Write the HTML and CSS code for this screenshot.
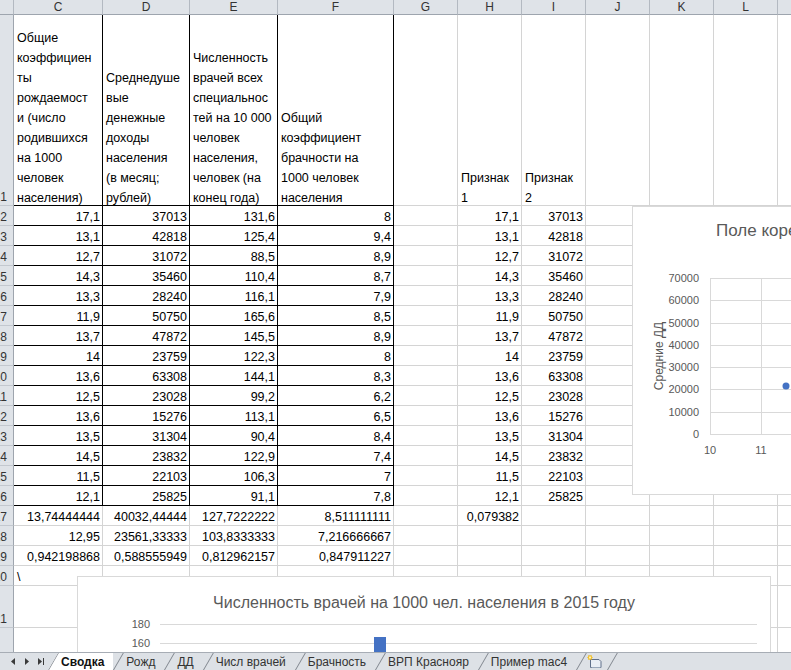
FILE: index.html
```html
<!DOCTYPE html>
<html lang="ru">
<head>
    <meta charset="UTF-8">
    <title>Сводка</title>
    <link rel="stylesheet" href="styles.css">
</head>
<body>
<div class="book">
    <div class="sheet">
        <div class="grid">
            <div class="ch"></div><div class="ch">C</div><div class="ch">D</div><div class="ch">E</div><div class="ch">F</div><div class="ch">G</div><div class="ch">H</div><div class="ch">I</div><div class="ch">J</div><div class="ch">K</div><div class="ch">L</div><div class="ch">M</div>

            <div class="rn">1</div>
            <div class="b"><span class="wrap">Общие<br>коэффициен<br>ты<br>рождаемост<br>и (число<br>родившихся<br>на 1000<br>человек<br>населения)</span></div>
            <div class="b"><span class="wrap">Среднедуше<br>вые<br>денежные<br>доходы<br>населения<br>(в месяц;<br>рублей)</span></div>
            <div class="b"><span class="wrap">Численность<br>врачей всех<br>специальнос<br>тей на 10 000<br>человек<br>населения,<br>человек (на<br>конец года)</span></div>
            <div class="b"><span class="wrap">Общий<br>коэффициент<br>брачности на<br>1000 человек<br>населения</span></div>
            <div></div>
            <div><span class="wrap">Признак<br>1</span></div>
            <div><span class="wrap">Признак<br>2</span></div>
            <div></div><div></div><div></div><div></div>

            <div class="rn">2</div><div class="b n">17,1</div><div class="b n">37013</div><div class="b n">131,6</div><div class="b n">8</div><div></div><div class="n">17,1</div><div class="n">37013</div><div></div><div></div><div></div><div></div>
            <div class="rn">3</div><div class="b n">13,1</div><div class="b n">42818</div><div class="b n">125,4</div><div class="b n">9,4</div><div></div><div class="n">13,1</div><div class="n">42818</div><div></div><div></div><div></div><div></div>
            <div class="rn">4</div><div class="b n">12,7</div><div class="b n">31072</div><div class="b n">88,5</div><div class="b n">8,9</div><div></div><div class="n">12,7</div><div class="n">31072</div><div></div><div></div><div></div><div></div>
            <div class="rn">5</div><div class="b n">14,3</div><div class="b n">35460</div><div class="b n">110,4</div><div class="b n">8,7</div><div></div><div class="n">14,3</div><div class="n">35460</div><div></div><div></div><div></div><div></div>
            <div class="rn">6</div><div class="b n">13,3</div><div class="b n">28240</div><div class="b n">116,1</div><div class="b n">7,9</div><div></div><div class="n">13,3</div><div class="n">28240</div><div></div><div></div><div></div><div></div>
            <div class="rn">7</div><div class="b n">11,9</div><div class="b n">50750</div><div class="b n">165,6</div><div class="b n">8,5</div><div></div><div class="n">11,9</div><div class="n">50750</div><div></div><div></div><div></div><div></div>
            <div class="rn">8</div><div class="b n">13,7</div><div class="b n">47872</div><div class="b n">145,5</div><div class="b n">8,9</div><div></div><div class="n">13,7</div><div class="n">47872</div><div></div><div></div><div></div><div></div>
            <div class="rn">9</div><div class="b n">14</div><div class="b n">23759</div><div class="b n">122,3</div><div class="b n">8</div><div></div><div class="n">14</div><div class="n">23759</div><div></div><div></div><div></div><div></div>
            <div class="rn">10</div><div class="b n">13,6</div><div class="b n">63308</div><div class="b n">144,1</div><div class="b n">8,3</div><div></div><div class="n">13,6</div><div class="n">63308</div><div></div><div></div><div></div><div></div>
            <div class="rn">11</div><div class="b n">12,5</div><div class="b n">23028</div><div class="b n">99,2</div><div class="b n">6,2</div><div></div><div class="n">12,5</div><div class="n">23028</div><div></div><div></div><div></div><div></div>
            <div class="rn">12</div><div class="b n">13,6</div><div class="b n">15276</div><div class="b n">113,1</div><div class="b n">6,5</div><div></div><div class="n">13,6</div><div class="n">15276</div><div></div><div></div><div></div><div></div>
            <div class="rn">13</div><div class="b n">13,5</div><div class="b n">31304</div><div class="b n">90,4</div><div class="b n">8,4</div><div></div><div class="n">13,5</div><div class="n">31304</div><div></div><div></div><div></div><div></div>
            <div class="rn">14</div><div class="b n">14,5</div><div class="b n">23832</div><div class="b n">122,9</div><div class="b n">7,4</div><div></div><div class="n">14,5</div><div class="n">23832</div><div></div><div></div><div></div><div></div>
            <div class="rn">15</div><div class="b n">11,5</div><div class="b n">22103</div><div class="b n">106,3</div><div class="b n">7</div><div></div><div class="n">11,5</div><div class="n">22103</div><div></div><div></div><div></div><div></div>
            <div class="rn">16</div><div class="b n">12,1</div><div class="b n">25825</div><div class="b n">91,1</div><div class="b n">7,8</div><div></div><div class="n">12,1</div><div class="n">25825</div><div></div><div></div><div></div><div></div>

            <div class="rn">17</div><div class="n">13,74444444</div><div class="n">40032,44444</div><div class="n">127,7222222</div><div class="n">8,511111111</div><div></div><div class="n">0,079382</div><div></div><div></div><div></div><div></div><div></div>
            <div class="rn">18</div><div class="n">12,95</div><div class="n">23561,33333</div><div class="n">103,8333333</div><div class="n">7,216666667</div><div></div><div></div><div></div><div></div><div></div><div></div><div></div>
            <div class="rn">19</div><div class="n">0,942198868</div><div class="n">0,588555949</div><div class="n">0,812962157</div><div class="n">0,847911227</div><div></div><div></div><div></div><div></div><div></div><div></div><div></div>
            <div class="rn">20</div><div>\</div><div></div><div></div><div></div><div></div><div></div><div></div><div></div><div></div><div></div><div></div>
            <div class="rn">21</div><div></div><div></div><div></div><div></div><div></div><div></div><div></div><div></div><div></div><div></div><div></div>
            <div class="rn">22</div><div></div><div></div><div></div><div></div><div></div><div></div><div></div><div></div><div></div><div></div><div></div>
        </div>

        <!-- scatter chart: birth rate vs average income -->
        <div class="chart scatter">
            <svg width="420" height="287">
                <text class="title" x="83" y="29">Поле кореляции</text>
                <g class="grid-lines">
                    <line x1="77" y1="71.5" x2="420" y2="71.5"/>
                    <line x1="77" y1="93.5" x2="420" y2="93.5"/>
                    <line x1="77" y1="116.5" x2="420" y2="116.5"/>
                    <line x1="77" y1="138.5" x2="420" y2="138.5"/>
                    <line x1="77" y1="160.5" x2="420" y2="160.5"/>
                    <line x1="77" y1="182.5" x2="420" y2="182.5"/>
                    <line x1="77" y1="205.5" x2="420" y2="205.5"/>
                    <line x1="77" y1="227.5" x2="420" y2="227.5"/>
                    <line x1="77.5" y1="71" x2="77.5" y2="228"/>
                    <line x1="128.5" y1="71" x2="128.5" y2="228"/>
                    <line x1="179.5" y1="71" x2="179.5" y2="228"/>
                </g>
                <g class="axis" text-anchor="end">
                    <text x="66" y="75">70000</text>
                    <text x="66" y="97">60000</text>
                    <text x="66" y="120">50000</text>
                    <text x="66" y="142">40000</text>
                    <text x="66" y="164">30000</text>
                    <text x="66" y="186">20000</text>
                    <text x="66" y="209">10000</text>
                    <text x="66" y="231">0</text>
                </g>
                <g class="axis" text-anchor="middle">
                    <text x="77" y="247">10</text>
                    <text x="128" y="247">11</text>
                    <text x="179" y="247">12</text>
                </g>
                <text class="axis-title" text-anchor="middle" transform="translate(30 149) rotate(-90)">Средние  ДД</text>
                <circle cx="153" cy="179" r="3.5" fill="#4472c4"/>
                <circle cx="174" cy="122" r="3.5" fill="#4472c4"/>
                <circle cx="184" cy="175" r="3.5" fill="#4472c4"/>
            </svg>
        </div>

        <!-- column chart: doctors per 1000 -->
        <div class="chart bars">
            <svg width="692" height="100">
                <text class="title" text-anchor="middle" x="346" y="31">Численность врачей на 1000 чел. населения в 2015 году</text>
                <g class="grid-lines">
                    <line x1="82" y1="47.5" x2="679" y2="47.5"/>
                    <line x1="82" y1="66.5" x2="679" y2="66.5"/>
                </g>
                <g class="axis" text-anchor="end">
                    <text x="72" y="51">180</text>
                    <text x="72" y="70">160</text>
                </g>
                <rect x="296" y="60" width="12" height="40" fill="#4472c4"/>
            </svg>
        </div>
    </div>

    <div class="tabbar">
        <div class="nav">
            <svg width="48" height="17">
                <polygon points="15,5 15,12 11,8.5"/>
                <polygon points="25,5 25,12 29,8.5"/>
                <polygon points="38,5 38,12 42,8.5"/>
                <rect x="43" y="5" width="1" height="7"/>
            </svg>
        </div>
        <div class="tab on">Сводка</div>
        <div class="tab">Рожд</div>
        <div class="tab">ДД</div>
        <div class="tab">Числ врачей</div>
        <div class="tab">Брачность</div>
        <div class="tab">ВРП Краснояр</div>
        <div class="tab">Пример mac4</div>
        <div class="tab add">
            <svg width="17" height="15">
                <path d="M4.5 5.5h8.5l2 2v6h-10.5z" fill="#e9eef5" stroke="#60708a"/>
                <path d="M5.5 13.5h9" stroke="#9aa8bb"/>
                <path d="M4 1v5M1.5 3.5h5M2.2 1.7l3.6 3.6M5.8 1.7l-3.6 3.6" stroke="#f2b300" stroke-width="1.1"/>
                <circle cx="4" cy="3.5" r="1.2" fill="#fff3b0"/>
            </svg>
        </div>
        <div class="tab end"></div>
    </div>
</div>
</body>
</html>
```

FILE: styles.css
```css
body {
    margin: 0;
    background: #fff;
    font-family: "Liberation Sans", Arial, sans-serif;
    font-size: 12.5px;
    color: #000;
}
.book {
    width: 791px;
    height: 670px;
    display: flex;
    flex-direction: column;
    overflow: hidden;
}
.sheet {
    position: relative;
    flex: 1;
    overflow: hidden;
}

/* cells */
.grid {
    display: grid;
    grid-template-columns: 14px 89px 87px 88px 116px repeat(7, 64px);
    grid-template-rows: 15px 191px repeat(19, 20px) 42px 60px;
    width: max-content;
}
.grid > div {
    box-sizing: border-box;
    min-width: 0;
    display: flex;
    align-items: flex-end;
    padding: 0 2px 0 3px;
    border-right: 1px solid #d4d4d4;
    border-bottom: 1px solid #d4d4d4;
    line-height: 16px;
    white-space: nowrap;
}
.grid > .n {
    justify-content: flex-end;
}
.grid > .b {
    border-right-color: #000;
    border-bottom-color: #000;
}
.wrap {
    line-height: 20px;
    margin-bottom: -3px;
}

/* column letters and row numbers */
.grid > .ch {
    background: #dfe3e8;
    border-right-color: #b3b9c1;
    border-bottom-color: #9ea5ae;
    align-items: center;
    justify-content: center;
    padding: 0;
    font-size: 12px;
    color: #333;
}
.grid > .rn {
    background: #dfe3e8;
    border-right-color: #9ea5ae;
    border-bottom-color: #c3c8cf;
    justify-content: flex-end;
    overflow: hidden;
    padding: 0 6px 0 0;
    font-size: 12px;
    color: #333;
}

/* charts lying on top of the sheet */
.chart {
    position: absolute;
    background: #fff;
    border: 1px solid #d9d9d9;
}
.chart svg {
    display: block;
}
.scatter {
    left: 632px;
    top: 206px;
    width: 420px;
    height: 287px;
}
.bars {
    left: 77px;
    top: 576px;
    width: 692px;
    height: 100px;
}
.title {
    font-size: 17px;
    fill: #595959;
}
.bars .title {
    font-size: 16px;
}
.grid-lines line {
    stroke: #d9d9d9;
    stroke-width: 1;
}
.axis {
    font-size: 11px;
    fill: #595959;
}
.axis-title {
    font-size: 12px;
    fill: #595959;
}

/* sheet tabs */
.tabbar {
    height: 18px;
    box-sizing: border-box;
    border-top: 1px solid #a7adb5;
    background: #dde1e6;
    display: flex;
    font-size: 12px;
    color: #333;
}
.nav {
    width: 48px;
    flex: none;
}
.nav svg {
    display: block;
    fill: #3a3a3a;
}
.tab {
    position: relative;
    display: flex;
    align-items: center;
    padding: 0 9px 0 13px;
    white-space: nowrap;
}
.tab::before {
    content: "";
    position: absolute;
    left: 0;
    top: 0;
    bottom: 0;
    width: 8px;
    border-left: 1px solid #80868e;
    transform: skewX(-30deg);
    transform-origin: bottom left;
}
.tab.on {
    background: #fff;
    font-weight: bold;
    color: #111;
    clip-path: polygon(0 100%, 10px 0, 100% 0, 100% 100%);
}
.tab.add {
    padding: 0 4px 0 10px;
}
.tab.add svg {
    display: block;
}
.tab.end {
    padding: 0;
    width: 12px;
}
```
